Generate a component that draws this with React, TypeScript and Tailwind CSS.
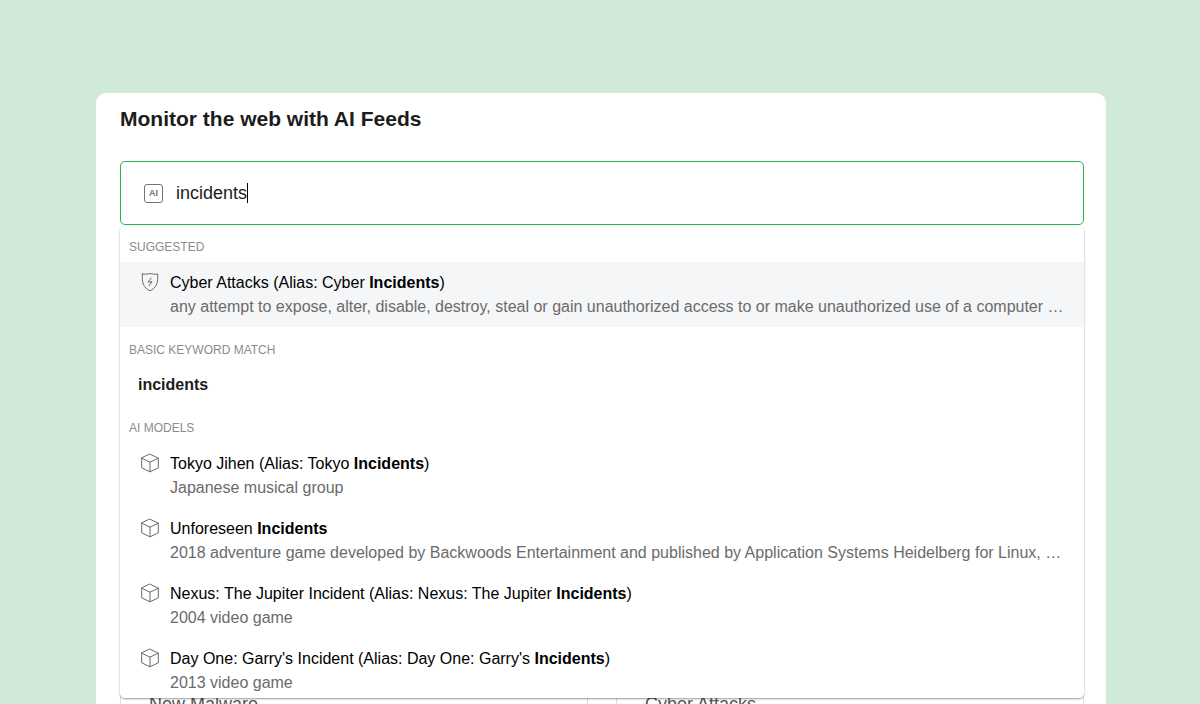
import { useState } from 'react';

type Suggestion = {
  icon: 'shield' | 'cube';
  title: string;
  match: string;
  tail: string;
  description: string;
};

const suggested: Suggestion[] = [
  {
    icon: 'shield',
    title: 'Cyber Attacks (Alias: Cyber ',
    match: 'Incidents',
    tail: ')',
    description:
      'any attempt to expose, alter, disable, destroy, steal or gain unauthorized access to or make unauthorized use of a computer …',
  },
];

const models: Suggestion[] = [
  {
    icon: 'cube',
    title: 'Tokyo Jihen (Alias: Tokyo ',
    match: 'Incidents',
    tail: ')',
    description: 'Japanese musical group',
  },
  {
    icon: 'cube',
    title: 'Unforeseen ',
    match: 'Incidents',
    tail: '',
    description:
      '2018 adventure game developed by Backwoods Entertainment and published by Application Systems Heidelberg for Linux, …',
  },
  {
    icon: 'cube',
    title: 'Nexus: The Jupiter Incident (Alias: Nexus: The Jupiter ',
    match: 'Incidents',
    tail: ')',
    description: '2004 video game',
  },
  {
    icon: 'cube',
    title: "Day One: Garry's Incident (Alias: Day One: Garry's ",
    match: 'Incidents',
    tail: ')',
    description: '2013 video game',
  },
];

const feeds = ['New Malware', 'Cyber Attacks'];

function AiIcon() {
  return (
    <span
      aria-hidden="true"
      className="flex size-[19px] shrink-0 items-center justify-center rounded-[3px] border border-[#757575] text-[9px] leading-none font-bold text-[#757575]"
    >
      AI
    </span>
  );
}

function ShieldIcon() {
  return (
    <svg width="20" height="20" viewBox="0 0 20 20" fill="none" stroke="#6b6b6b" strokeLinejoin="round" strokeLinecap="round" aria-hidden="true">
      <path d="M2.4 2 C5 2.4 7.5 2.2 10 1.5 C12.5 2.2 15 2.4 17.6 2 C17.9 6 17.8 9.8 16.4 12.8 C15.2 15.4 12.8 17.6 10 18.8 C7.2 17.6 4.8 15.4 3.6 12.8 C2.2 9.8 2.1 6 2.4 2 Z" />
      <path d="M11.2 6 L8 10.2 L12 9.6 L9.2 13.6" />
    </svg>
  );
}

function CubeIcon() {
  return (
    <svg width="20" height="20" viewBox="0 0 20 20" fill="none" stroke="#6b6b6b" strokeLinejoin="round" strokeLinecap="round" aria-hidden="true">
      <path d="M10 1.2 L18.3 5.2 V14.8 L10 18.8 L1.7 14.8 V5.2 Z" />
      <path d="M1.7 5.2 L10 9.2 L18.3 5.2 M10 9.2 V18.8" />
    </svg>
  );
}

function GroupLabel({ children }: { children: string }) {
  return <h2 className="px-[9px] text-[12px] leading-4 text-[#8c8c8c]">{children}</h2>;
}

function SuggestionRow({ item, active = false }: { item: Suggestion; active?: boolean }) {
  return (
    <li>
      <button
        type="button"
        className={`flex w-full gap-2.5 pt-[9px] pr-4 pb-2 pl-5 text-left ${active ? 'bg-[#f5f6f8]' : 'bg-white'}`}
      >
        <span className="mt-px shrink-0">{item.icon === 'shield' ? <ShieldIcon /> : <CubeIcon />}</span>
        <span className="min-w-0 flex-1 text-[16px] leading-6">
          <span className="block truncate text-black">
            {item.title}
            <b>{item.match}</b>
            {item.tail}
          </span>
          <span className="block truncate text-[#6b6b6b]">{item.description}</span>
        </span>
      </button>
    </li>
  );
}

export default function App() {
  const [query, setQuery] = useState('incidents');

  return (
    <div className="h-screen overflow-hidden bg-[#d1e9d8] pt-[93px] pr-[94px] pl-24 font-['Liberation_Sans',Arial,sans-serif]">
      <main className="min-h-full rounded-t-[10px] bg-white pt-3 pr-[22px] pl-6">
        <h1 className="text-[21px] leading-7 font-bold text-[#1c1c1c]">Monitor the web with AI Feeds</h1>

        <div className="relative mt-7">
          <label className="flex h-16 items-center rounded-[5px] border border-[#2bb24c] bg-white pl-[23px]">
            <AiIcon />
            <input
              aria-label="Search AI Feeds"
              value={query}
              onChange={(e) => setQuery(e.target.value)}
              className="ml-[13px] [field-sizing:content] text-[18px] leading-6 text-[#1c1c1c] caret-transparent outline-none"
            />
            <span aria-hidden="true" className="h-5 w-px bg-black" />
          </label>

          {/* Results */}
          <div className="absolute inset-x-0 top-full mt-px h-[472px] overflow-hidden rounded-[5px] bg-white pt-[13px] shadow-[0_1px_2px_rgba(0,0,0,0.4)]">
            <GroupLabel>SUGGESTED</GroupLabel>
            <ul className="mt-[7px]">
              {suggested.map((item) => (
                <SuggestionRow key={item.title} item={item} active />
              ))}
            </ul>

            <div className="mt-[15px]">
              <GroupLabel>BASIC KEYWORD MATCH</GroupLabel>
              <button type="button" className="mt-[15px] block w-full px-[18px] text-left text-[16px] leading-6 font-bold text-[#1c1c1c]">
                {query}
              </button>
            </div>

            <div className="mt-[23px]">
              <GroupLabel>AI MODELS</GroupLabel>
              <ul className="mt-[7px]">
                {models.map((item) => (
                  <SuggestionRow key={item.title} item={item} />
                ))}
              </ul>
            </div>
          </div>
        </div>

        {/* Feed cards under the results */}
        <div className="mt-[420px] grid grid-cols-2 gap-7">
          {feeds.map((feed) => (
            <section key={feed} className="h-40 rounded-[5px] border border-[#dcdcdc] px-7 pt-[46px]">
              <h3 className="text-[18px] leading-6 text-[#555]">{feed}</h3>
            </section>
          ))}
        </div>
      </main>
    </div>
  );
}
